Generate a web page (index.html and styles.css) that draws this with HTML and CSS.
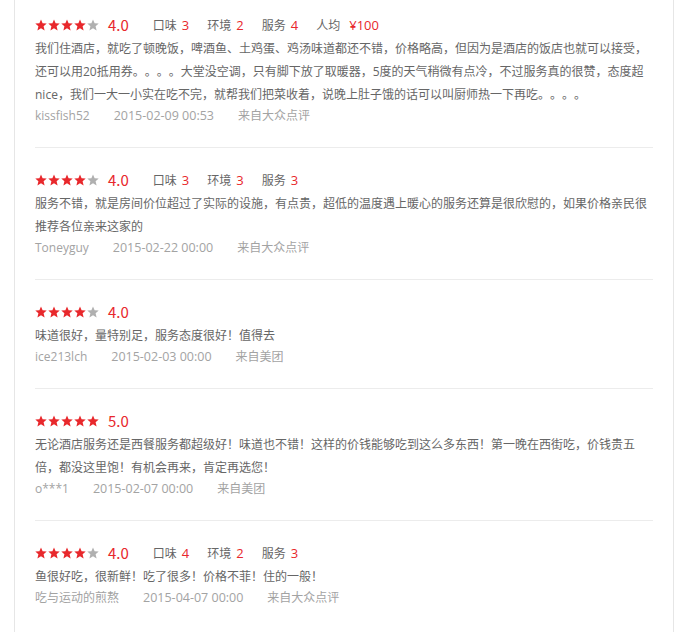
FILE: index.html
```html
<!DOCTYPE html>
<html lang="zh-CN">
<head>
  <meta charset="UTF-8" />
  <meta name="viewport" content="width=device-width, initial-scale=1.0" />
  <title>用户点评</title>
  <link rel="stylesheet" href="styles.css">
</head>
<body>

  <svg width="0" height="0" class="defs">
    <symbol id="star" viewBox="0 0 12 12">
      <polygon points="6,0.4 7.6,4.2 11.7,4.5 8.6,7.2 9.6,11.4 6,9.2 2.4,11.4 3.4,7.2 0.3,4.5 4.4,4.2" />
    </symbol>
  </svg>

  <div class="comments">

    <div class="review first">
      <div class="review-head">
        <span class="stars">
          <svg class="on"><use href="#star"/></svg><svg class="on"><use href="#star"/></svg><svg class="on"><use href="#star"/></svg><svg class="on"><use href="#star"/></svg><svg class="off"><use href="#star"/></svg>
        </span>
        <span class="score">4.0</span>
        <span class="sub">口味<em>3</em></span>
        <span class="sub">环境<em>2</em></span>
        <span class="sub">服务<em>4</em></span>
        <span class="sub">人均<em class="price">¥100</em></span>
      </div>
      <p class="review-text">我们住酒店，就吃了顿晚饭，啤酒鱼、土鸡蛋、鸡汤味道都还不错，价格略高，但因为是酒店的饭店也就可以接受，还可以用20抵用券。。。。大堂没空调，只有脚下放了取暖器，5度的天气稍微有点冷，不过服务真的很赞，态度超nice，我们一大一小实在吃不完，就帮我们把菜收着，说晚上肚子饿的话可以叫厨师热一下再吃。。。。</p>
      <div class="review-meta">
        <span>kissfish52</span>
        <span class="time">2015-02-09 00:53</span>
        <span>来自大众点评</span>
      </div>
    </div>

    <div class="review">
      <div class="review-head">
        <span class="stars">
          <svg class="on"><use href="#star"/></svg><svg class="on"><use href="#star"/></svg><svg class="on"><use href="#star"/></svg><svg class="on"><use href="#star"/></svg><svg class="off"><use href="#star"/></svg>
        </span>
        <span class="score">4.0</span>
        <span class="sub">口味<em>3</em></span>
        <span class="sub">环境<em>3</em></span>
        <span class="sub">服务<em>3</em></span>
      </div>
      <p class="review-text">服务不错，就是房间价位超过了实际的设施，有点贵，超低的温度遇上暖心的服务还算是很欣慰的，如果价格亲民很推荐各位亲来这家的</p>
      <div class="review-meta">
        <span>Toneyguy</span>
        <span class="time">2015-02-22 00:00</span>
        <span>来自大众点评</span>
      </div>
    </div>

    <div class="review">
      <div class="review-head">
        <span class="stars">
          <svg class="on"><use href="#star"/></svg><svg class="on"><use href="#star"/></svg><svg class="on"><use href="#star"/></svg><svg class="on"><use href="#star"/></svg><svg class="off"><use href="#star"/></svg>
        </span>
        <span class="score">4.0</span>
      </div>
      <p class="review-text">味道很好，量特别足，服务态度很好！值得去</p>
      <div class="review-meta">
        <span>ice213lch</span>
        <span class="time">2015-02-03 00:00</span>
        <span>来自美团</span>
      </div>
    </div>

    <div class="review">
      <div class="review-head">
        <span class="stars">
          <svg class="on"><use href="#star"/></svg><svg class="on"><use href="#star"/></svg><svg class="on"><use href="#star"/></svg><svg class="on"><use href="#star"/></svg><svg class="on"><use href="#star"/></svg>
        </span>
        <span class="score">5.0</span>
      </div>
      <p class="review-text">无论酒店服务还是西餐服务都超级好！味道也不错！这样的价钱能够吃到这么多东西！第一晚在西街吃，价钱贵五倍，都没这里饱！有机会再来，肯定再选您！</p>
      <div class="review-meta">
        <span>o***1</span>
        <span class="time">2015-02-07 00:00</span>
        <span>来自美团</span>
      </div>
    </div>

    <div class="review">
      <div class="review-head">
        <span class="stars">
          <svg class="on"><use href="#star"/></svg><svg class="on"><use href="#star"/></svg><svg class="on"><use href="#star"/></svg><svg class="on"><use href="#star"/></svg><svg class="off"><use href="#star"/></svg>
        </span>
        <span class="score">4.0</span>
        <span class="sub">口味<em>4</em></span>
        <span class="sub">环境<em>2</em></span>
        <span class="sub">服务<em>3</em></span>
      </div>
      <p class="review-text">鱼很好吃，很新鲜！吃了很多！价格不菲！住的一般！</p>
      <div class="review-meta">
        <span>吃与运动的煎熬</span>
        <span class="time">2015-04-07 00:00</span>
        <span>来自大众点评</span>
      </div>
    </div>

  </div>

</body>
</html>
```

FILE: styles.css
```css
body {
  margin: 0;
  background: #fff;
  font-family: "Open Sans", "Noto Sans CJK SC", sans-serif;
  font-size: 12px;
  color: #666;
  text-spacing-trim: space-all;
}

.defs {
  position: absolute;
  width: 0;
  height: 0;
}

.comments {
  width: 658px;
  min-height: 632px;
  margin-left: 14px;
  border-left: 1px solid #e6e6e6;
  border-right: 1px solid #e6e6e6;
}

.review {
  margin: 0 20px;
  padding: 20px 0 21px;
  border-bottom: 1px solid #ececec;
}

.review.first {
  padding-top: 13px;
}

.review:last-child {
  border-bottom: none;
}

.review-head {
  display: flex;
  align-items: center;
  height: 24px;
  line-height: 24px;
}

.stars {
  display: flex;
  gap: 1px;
}

.stars svg {
  width: 12px;
  height: 12px;
}

.stars .on {
  fill: #e8282c;
}

.stars .off {
  fill: #b0b0b0;
}

.score {
  margin-left: 9px;
  margin-right: 24px;
  font-family: "Noto Sans CJK SC", sans-serif;
  font-size: 15px;
  color: #e8282c;
}

.sub {
  margin-right: 18px;
  color: #666;
}

.sub em {
  font-style: normal;
  margin-left: 5px;
  color: #e8282c;
  font-size: 13px;
}

.sub em.price {
  margin-left: 9px;
}

.review-text {
  margin: 0;
  line-height: 23px;
  color: #666;
}

.review-meta {
  display: flex;
  gap: 24px;
  line-height: 20px;
  color: #a3a3a3;
}

.review-meta .time {
  font-size: 12.5px;
}
```
